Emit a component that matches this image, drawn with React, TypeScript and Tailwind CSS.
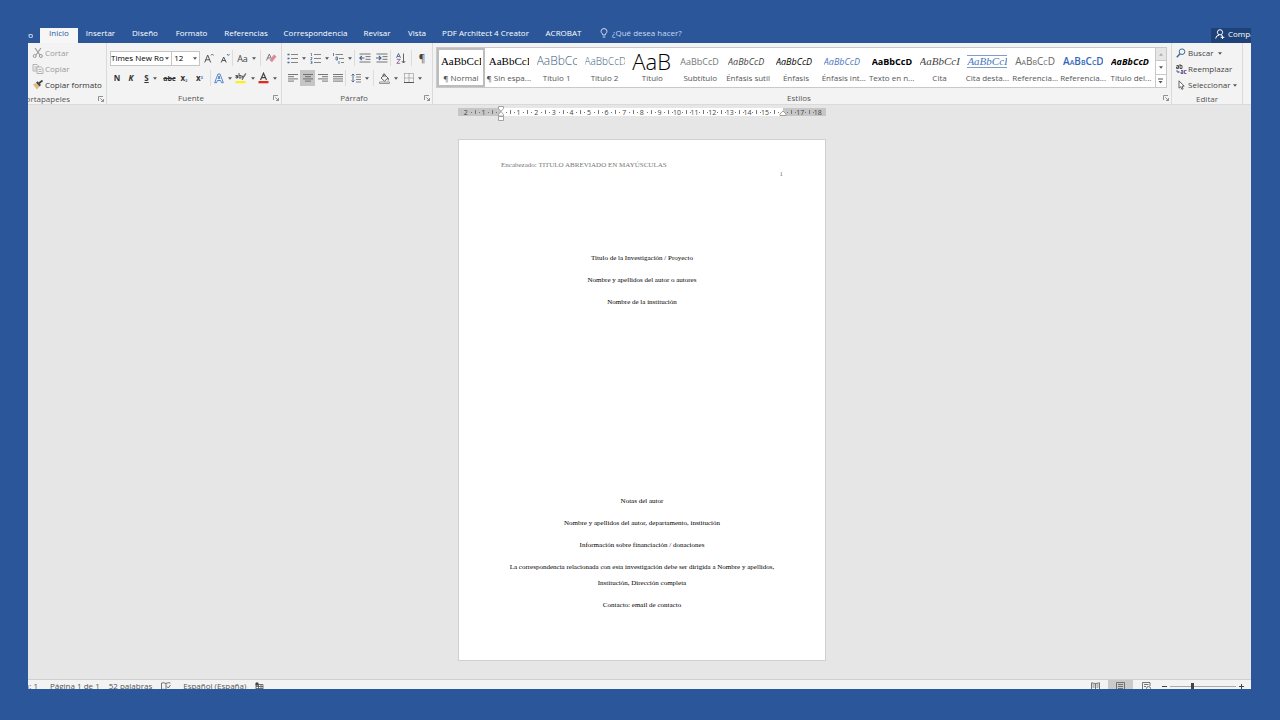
import type { ReactNode } from "react";

const tabs = [
  { label: "Insertar", width: "w-[45px]" },
  { label: "Diseño", width: "w-[44px]" },
  { label: "Formato", width: "w-[49px]" },
  { label: "Referencias", width: "w-[60px]" },
  { label: "Correspondencia", width: "w-[79px]" },
  { label: "Revisar", width: "w-[44px]" },
  { label: "Vista", width: "w-[36px]" },
  { label: "PDF Architect 4 Creator", width: "w-[101px]" },
  { label: "ACROBAT", width: "w-[55px]" },
];

const serif = "font-['Liberation_Serif',serif]";

const wordStyles = [
  { name: "¶ Normal", sample: "AaBbCcI", look: `${serif} text-[11px] text-black` },
  { name: "¶ Sin espa...", sample: "AaBbCcI", look: `${serif} text-[11px] text-black` },
  { name: "Título 1", sample: "AaBbCc", look: "text-[12px] font-light text-[#3c6080]" },
  { name: "Título 2", sample: "AaBbCcD", look: "text-[10px] font-light text-[#3c6080]" },
  { name: "Título", sample: "AaB", look: "text-[22px] font-light text-black" },
  { name: "Subtítulo", sample: "AaBbCcD", look: "text-[9px] text-[#777]" },
  { name: "Énfasis sutil", sample: "AaBbCcD", look: "text-[9px] italic text-[#444]" },
  { name: "Énfasis", sample: "AaBbCcD", look: "text-[9px] italic text-black" },
  { name: "Énfasis int...", sample: "AaBbCcD", look: "text-[9px] italic text-[#4a78bd]" },
  { name: "Texto en n...", sample: "AaBbCcD", look: "text-[9px] font-bold text-black" },
  { name: "Cita", sample: "AaBbCcI", look: `${serif} text-[11px] italic text-[#444]` },
  { name: "Cita desta...", sample: "AaBbCcI", look: `${serif} text-[11px] italic text-[#4a78bd] border-y border-[#7f9dcc]` },
  { name: "Referencia...", sample: "AaBbCcD", look: "text-[10px] [font-variant-caps:small-caps] text-[#666]" },
  { name: "Referencia...", sample: "AaBbCcD", look: "text-[10px] font-semibold [font-variant-caps:small-caps] text-[#2f66bb]" },
  { name: "Título del...", sample: "AaBbCcD", look: "text-[9px] font-bold italic text-black" },
];

function Caret() {
  return (
    <svg width="4" height="3" viewBox="0 0 4 3" className="flex-none">
      <path d="M0 .3h4L2 2.7z" fill="#555" />
    </svg>
  );
}

function Tool({ label, width, active, children }: { label: string; width: string; active?: boolean; children: ReactNode }) {
  return (
    <button
      aria-label={label}
      className={`flex h-4 flex-none items-center justify-center gap-1 leading-none ${width} ${active ? "bg-[#c5c5c5]" : ""}`}
    >
      {children}
    </button>
  );
}

function Divider() {
  return <span className="h-4 w-px flex-none bg-[#dcdcdc]" />;
}

function Launcher({ label }: { label: string }) {
  return (
    <button aria-label={label} className="flex-none">
      <svg width="6" height="6" viewBox="0 0 6 6" fill="none" stroke="#777" strokeWidth=".8">
        <path d="M.5 5V.5H5M2.3 2.3l3 3M5.5 3v2.5H3" />
      </svg>
    </button>
  );
}

function GroupFooter({ label, launcher }: { label: string; launcher?: boolean }) {
  return (
    <div className="flex h-3 items-center px-[2px] text-[#555]">
      <span className="flex-1 text-center">{label}</span>
      {launcher && <Launcher label={`Opciones de ${label}`} />}
    </div>
  );
}

function Lines({ rows }: { rows: number[][] }) {
  return (
    <svg width="10" height="10" viewBox="0 0 10 10" stroke="#666" strokeWidth=".9">
      {rows.map(([from, to], i) => (
        <path key={i} d={`M${from} ${1.5 + i * 2.2}H${to}`} />
      ))}
    </svg>
  );
}

function ListIcon({ kind }: { kind: "bullets" | "numbers" | "levels" }) {
  return (
    <svg width="11" height="11" viewBox="0 0 11 11" fill="none">
      {kind === "bullets" && <path d="M.5 1.5h2M.5 5.5h2M.5 9.5h2" stroke="#44658f" strokeWidth="1.6" />}
      {kind === "numbers" && <path d="M.5.5h1v2.5M.5 4.5h1.5v1l-1.5 1h1.5M.5 8.3H2v2.4H.5M1 9.5h1" stroke="#44658f" strokeWidth=".7" />}
      {kind === "levels" && <path d="M.5 0v3M3 4h1.5v3H3zM6 8v3" stroke="#44658f" strokeWidth=".8" />}
      {kind === "levels" ? (
        <path d="M2.5 1.5H10M6 5.5h5M8 9.5h3" stroke="#777" strokeWidth=".9" />
      ) : (
        <path d="M4 1.5h7M4 5.5h7M4 9.5h7" stroke="#777" strokeWidth=".9" />
      )}
    </svg>
  );
}

function IndentIcon({ right }: { right?: boolean }) {
  return (
    <svg width="12" height="10" viewBox="0 0 12 10" fill="none">
      <path d="M.5 1h11M6.5 3.6h5M6.5 6.3h5M.5 9h11" stroke="#666" strokeWidth=".9" />
      <path d={right ? "M0 5h4.5M3 3l2 2-2 2" : "M1 5h4.5M2.8 3l-2 2 2 2"} stroke="#44658f" strokeWidth="1.1" />
    </svg>
  );
}

function Clipboard() {
  return (
    <section className="flex w-[79px] flex-none flex-col border-r border-[#dadada]">
      <div className="flex h-[50px] flex-col pt-[2px] pl-1">
        <button className="flex h-4 items-center gap-px text-[#999]">
          <svg width="12" height="10" viewBox="0 0 12 10" fill="none" stroke="#999">
            <path d="M3 0l5 7M9 0L4 7" strokeWidth="1.1" />
            <circle cx="2.7" cy="8" r="1.5" />
            <circle cx="8.9" cy="8" r="1.5" />
          </svg>
          Cortar
        </button>
        <button className="flex h-4 items-center gap-px text-[#999]">
          <svg width="12" height="10" viewBox="0 0 12 10" fill="#f4f4f4" stroke="#aaa" strokeWidth=".9">
            <path d="M1 .5h4l1.5 1.5V7H1zM2.3 3h3M2.3 5h3" />
            <path d="M5 3h4.2L11 4.7V9.5H5zM6.5 5.5h3M6.5 7.5h3" />
          </svg>
          Copiar
        </button>
        <button className="flex h-4 items-center gap-px whitespace-nowrap text-[#333]">
          <svg width="12" height="10" viewBox="0 0 12 10">
            <path d="M1 4.5l3-1.5 3.5 3.5-2.5 3z" fill="#dfbd78" />
            <path d="M4 2.5l1.500-1.300L9 5 7.500 6.500z" fill="#444" />
            <path d="M7 3.2L10.5.5" stroke="#444" strokeWidth="1.8" />
          </svg>
          Copiar formato
        </button>
      </div>
      <div className="flex h-3 items-center justify-between pr-[2px] text-[#555]">
        <span className="flex w-[42px] justify-end overflow-hidden">Portapapeles</span>
        <Launcher label="Opciones de Portapapeles" />
      </div>
    </section>
  );
}

function FontGroup() {
  return (
    <section className="flex w-[175px] flex-none flex-col border-r border-[#dadada]">
      <div className="flex h-[50px] flex-col gap-1 pt-[7px] pl-[3px]">
        <div className="flex h-4 items-center">
          <div className="flex h-[15px] w-[63px] items-center border border-[#c6c6c6] bg-white pr-[2px]">
            <select aria-label="Fuente" className="h-3 min-w-0 flex-1 appearance-none overflow-hidden [text-overflow:clip]">
              <option>Times New Ro</option>
            </select>
            <Caret />
          </div>
          <div className="flex h-[15px] w-7 items-center border border-l-0 border-[#c6c6c6] bg-white pr-[2px]">
            <select aria-label="Tamaño de fuente" className="h-3 min-w-0 flex-1 appearance-none pl-[2px]">
              <option>12</option>
            </select>
            <Caret />
          </div>
          <Tool label="Aumentar tamaño" width="w-[18px]">
            <svg width="10" height="10" viewBox="0 0 10 10" fill="none" stroke="#555">
              <path d="M.7 9.5L3.700 2l3 7.500M1.700 6.800h4" />
              <path d="M7 2.500L8.300 1l1.300 1.500" stroke="#44658f" strokeWidth=".9" />
            </svg>
          </Tool>
          <Tool label="Reducir tamaño" width="w-[14px]">
            <svg width="10" height="10" viewBox="0 0 10 10" fill="none" stroke="#555">
              <path d="M1.2 9.5L3.700 4l2.500 5.500M2 7.500h3.500" />
              <path d="M7 1l1.300 1.500L9.600 1" stroke="#44658f" strokeWidth=".9" />
            </svg>
          </Tool>
          <Divider />
          <Tool label="Cambiar mayúsculas" width="w-[27px]">
            <span className="text-[9px] text-[#444]">Aa</span>
            <Caret />
          </Tool>
          <Divider />
          <Tool label="Borrar formato" width="w-5">
            <svg width="11" height="10" viewBox="0 0 11 10" fill="none">
              <path d="M.5 7.500L3.300 1l2 4.500M1.500 5h3" stroke="#777" />
              <path d="M3.500 7L8 1.500l2.500 2L6 9.200z" fill="#df8a9a" />
            </svg>
          </Tool>
        </div>
        <div className="flex h-4 items-center text-[#333]">
          <Tool label="Negrita" width="w-[14px]"><b>N</b></Tool>
          <Tool label="Cursiva" width="w-[14px]"><b className="italic">K</b></Tool>
          <Tool label="Subrayado" width="w-[25px]">
            <b className="underline">S</b>
            <Caret />
          </Tool>
          <Tool label="Tachado" width="w-[13px]"><b className="text-[7px] line-through">abc</b></Tool>
          <Tool label="Subíndice" width="w-4"><b>x<span className="text-[6px] text-[#44658f]">₂</span></b></Tool>
          <Tool label="Superíndice" width="w-[15px]"><b>x<span className="text-[6px] text-[#44658f]">²</span></b></Tool>
          <span className="w-[3px]" />
          <Divider />
          <Tool label="Efectos de texto" width="w-[23px]">
            <svg width="10" height="11" viewBox="0 0 10 11" fill="#fff" stroke="#3f78c3" strokeWidth=".9">
              <path d="M.7 9.700L4 1h2l3.300 8.700H7.400L6.700 7.500H3.300L2.600 9.700zM4 5.700h2L5 2.800z" />
            </svg>
            <Caret />
          </Tool>
          <Tool label="Color de resaltado" width="w-[22px]">
            <svg width="12" height="12" viewBox="0 0 12 12" fill="none">
              <path d="M.5 3.500h2V6H1V4.700h1.500M4 1v5h2V3.500H4M7 3.500L8.200 6M10 3L7 8" stroke="#444" strokeWidth=".9" />
              <path d="M6.500 6l4-5 1 1-4 5z" fill="#777" />
              <path d="M.5 9h10v2.300H.5z" fill="#f7f31a" />
            </svg>
            <Caret />
          </Tool>
          <Tool label="Color de fuente" width="w-[22px]">
            <svg width="11" height="12" viewBox="0 0 11 12" fill="none">
              <path d="M2.500 8L5.500 1.200 8.500 8M3.500 5.700h4" stroke="#444" strokeWidth="1.200" />
              <path d="M.5 9h10v2.300H.5z" fill="#e02b20" />
            </svg>
            <Caret />
          </Tool>
        </div>
      </div>
      <GroupFooter label="Fuente" launcher />
    </section>
  );
}

function ParagraphGroup() {
  return (
    <section className="flex w-[151px] flex-none flex-col border-r border-[#dadada]">
      <div className="flex h-[50px] flex-col gap-1 pt-[7px] pl-[3px]">
        <div className="flex h-4 items-center">
          <Tool label="Viñetas" width="w-[23px]"><ListIcon kind="bullets" /><Caret /></Tool>
          <Tool label="Numeración" width="w-[23px]"><ListIcon kind="numbers" /><Caret /></Tool>
          <Tool label="Lista multinivel" width="w-[23px]"><ListIcon kind="levels" /><Caret /></Tool>
          <Divider />
          <Tool label="Disminuir sangría" width="w-[19px]"><IndentIcon /></Tool>
          <Tool label="Aumentar sangría" width="w-4"><IndentIcon right /></Tool>
          <Divider />
          <Tool label="Ordenar" width="w-5">
            <svg width="10" height="11" viewBox="0 0 10 11" fill="none">
              <path d="M.5 4.800L2.500.5l2 4.300M1.200 3.500h2.500" stroke="#44658f" strokeWidth=".9" />
              <path d="M.8 6.300h3.400L.8 10.300h3.400" stroke="#8a5a92" strokeWidth=".9" />
              <path d="M7.500.5v9.500M5.700 8l1.800 2 1.800-2" stroke="#555" strokeWidth=".9" />
            </svg>
          </Tool>
          <Divider />
          <Tool label="Mostrar todo" width="w-5"><span className="text-[10px] text-[#444]">¶</span></Tool>
        </div>
        <div className="flex h-4 items-center">
          <Tool label="Alinear a la izquierda" width="w-[15px]"><Lines rows={[[0, 10], [0, 6], [0, 10], [0, 6]]} /></Tool>
          <Tool label="Centrar" width="w-[15px]" active><Lines rows={[[0, 10], [2, 8], [0, 10], [2, 8]]} /></Tool>
          <Tool label="Alinear a la derecha" width="w-[15px]"><Lines rows={[[0, 10], [4, 10], [0, 10], [4, 10]]} /></Tool>
          <Tool label="Justificar" width="w-[15px]"><Lines rows={[[0, 10], [0, 10], [0, 10], [0, 10]]} /></Tool>
          <Divider />
          <Tool label="Interlineado" width="w-[27px]">
            <svg width="10" height="10" viewBox="0 0 10 10" fill="none">
              <path d="M2 1v8M.5 2.500L2 1l1.500 1.500M.5 7.500L2 9l1.500-1.500" stroke="#44658f" strokeWidth=".9" />
              <path d="M5 1.500h5M5 4h5M5 6.500h5M5 9h5" stroke="#777" strokeWidth=".9" />
            </svg>
            <Caret />
          </Tool>
          <Divider />
          <Tool label="Sombreado" width="w-[29px]">
            <svg width="11" height="11" viewBox="0 0 11 11" fill="none" stroke="#555" strokeWidth=".9">
              <path d="M2 5l3.500-3.500L9 5 5.500 8.200zM4 4V1.500q1-1.500 2 0V4M9.300 5v2.500" />
              <path d="M.5 9h10v1.500H.5z" fill="#fff" stroke="#888" />
            </svg>
            <Caret />
          </Tool>
          <Tool label="Bordes" width="w-[20px]">
            <svg width="10" height="10" viewBox="0 0 10 10" fill="none" stroke="#777" strokeWidth=".9">
              <path d="M.5.5h9v9M.5.5v9M5 .5v9M.5 5h9" strokeDasharray="1 1" />
              <path d="M0 9.500h10" stroke="#444" />
            </svg>
            <Caret />
          </Tool>
        </div>
      </div>
      <GroupFooter label="Párrafo" launcher />
    </section>
  );
}

function StylesGroup() {
  return (
    <section className="flex min-w-0 flex-1 flex-col border-r border-[#dadada]">
      <div className="h-[50px] pt-1 pr-1 pl-[3px]">
        <div className="flex h-[41px] border border-[#c9c9c9] bg-white">
          {wordStyles.map((style, i) => (
            <button
              key={i}
              className={`flex min-w-0 flex-1 flex-col items-center overflow-hidden ${i === 0 ? "outline-2 -outline-offset-2 outline-[#bdbdbd]" : ""}`}
            >
              <span className="flex h-6 w-10 items-center overflow-hidden pt-[2px]">
                <span className={`leading-none whitespace-nowrap ${style.look}`}>{style.sample}</span>
              </span>
              <span className="h-3 leading-3 whitespace-nowrap text-[#555]">{style.name}</span>
            </button>
          ))}
          <div className="flex w-[11px] flex-none flex-col divide-y divide-[#c9c9c9] border-l border-[#c9c9c9]">
            <button aria-label="Fila anterior" className="flex flex-1 items-center justify-center bg-[#e6e6e6]">
              <svg width="4" height="3" viewBox="0 0 4 3"><path d="M0 2.700h4L2 .3z" fill="#aaa" /></svg>
            </button>
            <button aria-label="Fila siguiente" className="flex flex-1 items-center justify-center"><Caret /></button>
            <button aria-label="Más estilos" className="flex flex-1 items-center justify-center">
              <svg width="5" height="6" viewBox="0 0 5 6"><path d="M0 .5h5v1H0zM.5 3h4l-2 2.500z" fill="#555" /></svg>
            </button>
          </div>
        </div>
      </div>
      <GroupFooter label="Estilos" launcher />
    </section>
  );
}

function EditGroup() {
  return (
    <section className="mr-2 flex w-[71px] flex-none flex-col border-r border-[#dadada]">
      <div className="flex h-[50px] flex-col pt-[2px] pl-1 text-[#444]">
        <button className="flex h-4 items-center gap-[2px]">
          <svg width="10" height="10" viewBox="0 0 10 10" fill="none">
            <circle cx="6" cy="3.700" r="2.800" stroke="#3d6d94" />
            <path d="M4 5.800L.8 9.200" stroke="#3d6d94" strokeWidth="1.500" />
          </svg>
          <span className="mr-[3px]">Buscar</span>
          <Caret />
        </button>
        <button className="flex h-4 items-center gap-px">
          <svg width="11" height="10" viewBox="0 0 11 10" fill="none" strokeWidth=".9">
            <path d="M.5 1.500h2v3h-2V3h2M4 0v4.500h2v-3H4" stroke="#444" />
            <path d="M5 6.500h2v3H5V8h2M10.500 6.500h-2v3h2" stroke="#6b4a84" />
            <path d="M1 6v2h2M2.300 7L3.300 8l-1 1" stroke="#44658f" />
          </svg>
          Reemplazar
        </button>
        <button className="flex h-4 items-center gap-[2px]">
          <svg width="10" height="10" viewBox="0 0 10 10" fill="#fff" stroke="#555" strokeWidth=".9">
            <path d="M3 .8v7.400l1.700-1.500 1.200 2.700 1.200-.6L6 6.200h2.200z" />
          </svg>
          Seleccionar
          <Caret />
        </button>
      </div>
      <GroupFooter label="Editar" />
    </section>
  );
}

// One centimetre on the ruler, in drawing units
const CM = 17.6;

function Ruler() {
  const origin = 43;
  const numbers = [-2, -1, 1, 2, 3, 4, 5, 6, 7, 8, 9, 10, 11, 12, 13, 14, 15, 17, 18];
  const halves = Array.from({ length: 20 }, (_, i) => i - 1.5);
  return (
    <svg width="368" height="16" viewBox="0 0 368 16" className="flex-none font-['Open_Sans',sans-serif]">
      <path d="M0 2h368v8H0z" fill="#c6c6c6" />
      <path d="M43 2h282v8H43z" fill="#fff" />
      {halves.map((n) => (
        <g key={n} fill="#777">
          <rect x={Math.round(origin + n * CM)} y="4" width="1" height="4" />
          <rect x={Math.round(origin + n * CM) - 4} y="6" width="1" height="1" />
          <rect x={Math.round(origin + n * CM) + 4} y="6" width="1" height="1" />
        </g>
      ))}
      {numbers.map((n) => (
        <text key={n} x={origin + n * CM} y="9" fontSize="7" fill="#444" textAnchor="middle">
          {Math.abs(n)}
        </text>
      ))}
      <path d="M40.500.5h5v2L43 5.500l-2.500-3zM43 5.500l2.500 3v1.500h-5V8.500zM40.500 10.500h5v4h-5z" fill="#fff" stroke="#999" strokeWidth=".9" />
      <path d="M325 5l3 3v1.500h-6V8z" fill="#fff" stroke="#999" strokeWidth=".9" />
    </svg>
  );
}

function Page() {
  return (
    <article className={`mt-[17px] flex h-[522px] w-[368px] flex-none flex-col border border-[#cfcfcf] bg-white px-[42px] text-center text-[7px] leading-4 text-black ${serif}`}>
      <header className="flex h-[110px] flex-col pt-[21px] leading-[9px] text-[#777]">
        <p className="text-left">Encabezado: TITULO ABREVIADO EN MAYÚSCULAS</p>
        <p className="text-right">1</p>
      </header>
      <div className="flex h-[243px] flex-col gap-[6px]">
        <p>Titulo de la Investigación / Proyecto</p>
        <p>Nombre y apellidos del autor o autores</p>
        <p>Nombre de la institución</p>
      </div>
      <div className="flex flex-col gap-[6px]">
        <p>Notas del autor</p>
        <p>Nombre y apellidos del autor, departamento, institución</p>
        <p>Información sobre financiación / donaciones</p>
        <p className="whitespace-nowrap">
          La correspondencia relacionada con esta investigación debe ser dirigida a Nombre y apellidos,
          <br />
          Institución, Dirección completa
        </p>
        <p>Contacto: email de contacto</p>
      </div>
    </article>
  );
}

function StatusBar() {
  return (
    <footer className="flex h-[10px] flex-none items-start overflow-hidden border-t border-[#cfcfcf] bg-[#f3f3f3] leading-3 whitespace-nowrap text-[#555]">
      <span className="flex w-[10px] justify-end overflow-hidden">Sección: 1</span>
      <span className="ml-3">Página 1 de 1</span>
      <span className="ml-[9px]">52 palabras</span>
      <button aria-label="Revisión" className="ml-[9px] pt-[2px]">
        <svg width="10" height="9" viewBox="0 0 10 9" fill="none" stroke="#666" strokeWidth=".9">
          <path d="M5 1.500Q3 .2.500 1v6.500q2.500-.8 4.500.5zM5 1.500Q7 .2 9.500 1M6 4.500l1.300 1.500L9.500 3" />
        </svg>
      </button>
      <span className="ml-3">Español (España)</span>
      <button aria-label="Grabar macro" className="ml-[9px] pt-[2px]">
        <svg width="9" height="9" viewBox="0 0 9 9" fill="none" stroke="#555">
          <path d="M1 2.500h7v6H1zM1 4.500h7M1 6.500h7M3.500 2.500v6M6 2.500v6" strokeWidth=".8" />
          <circle cx="2" cy="2" r="1.700" fill="#444" stroke="none" />
        </svg>
      </button>
      <div className="ml-auto flex items-start">
        <button aria-label="Modo de lectura" className="flex h-3 w-[25px] justify-center pt-[2px]">
          <svg width="9" height="9" viewBox="0 0 9 9" fill="none" stroke="#666" strokeWidth=".9">
            <path d="M.5.8l4 .8 4-.8v7h-8zM4.500 1.500V8M1.500 3h2M1.500 5h2M5.500 3h2M5.500 5h2" />
          </svg>
        </button>
        <button aria-label="Diseño de impresión" className="flex h-3 w-[25px] justify-center bg-[#cacaca] pt-[2px]">
          <svg width="9" height="9" viewBox="0 0 9 9" fill="none" stroke="#666" strokeWidth=".9">
            <path d="M.5.5h8v8h-8zM2 2.500h5M2 4.500h5M2 6.500h5" />
          </svg>
        </button>
        <button aria-label="Diseño web" className="flex h-3 w-[26px] justify-center pt-[2px]">
          <svg width="9" height="9" viewBox="0 0 9 9" fill="none" stroke="#666" strokeWidth=".9">
            <path d="M8 4V.5H.5v7H4M2 2.500h4.500M2 4.500h2" />
            <circle cx="6.500" cy="6.500" r="2" />
          </svg>
        </button>
        <button aria-label="Alejar" className="flex h-3 w-[11px] items-center justify-center">
          <svg width="5" height="5" viewBox="0 0 5 5"><path d="M0 2.500h5" stroke="#444" /></svg>
        </button>
        <input
          type="range"
          aria-label="Zoom"
          defaultValue={34}
          className="mt-[2px] h-[9px] w-[66px] appearance-none bg-[linear-gradient(#aaa,#aaa)] bg-[length:100%_1px] bg-center bg-no-repeat [&::-webkit-slider-thumb]:h-[7px] [&::-webkit-slider-thumb]:w-[3px] [&::-webkit-slider-thumb]:appearance-none [&::-webkit-slider-thumb]:bg-[#444]"
        />
        <button aria-label="Acercar" className="mr-[5px] flex h-3 w-[10px] items-center justify-center">
          <svg width="5" height="5" viewBox="0 0 5 5"><path d="M0 2.500h5M2.500 0v5" stroke="#444" /></svg>
        </button>
      </div>
    </footer>
  );
}

export default function App() {
  return (
    <div className="h-screen bg-[#2b579a] pt-7 pr-[29px] pb-[31px] pl-7 font-['Open_Sans','Noto_Sans',sans-serif] text-[8px] leading-3">
      <div className="flex h-full flex-col overflow-hidden">
        <nav className="flex h-[15px] flex-none items-center whitespace-nowrap text-white">
          <button className="flex w-[5px] justify-end overflow-hidden pb-[2px]">Archivo</button>
          <button className="ml-[7px] flex h-full w-[38px] items-center justify-center bg-[#f6f6f6] pb-[6px] text-[#2b579a]">
            Inicio
          </button>
          {tabs.map((tab) => (
            <button key={tab.label} className={`flex h-full flex-none items-center justify-center pb-[6px] ${tab.width}`}>
              {tab.label}
            </button>
          ))}
          <button className="ml-[9px] flex h-full items-center gap-1 pb-[6px] text-[#c9d8ef]">
            <svg width="8" height="10" viewBox="0 0 8 10" fill="none" stroke="#dce6f5" strokeWidth=".9">
              <path d="M2.700 7V6Q1 4.800 1 3.300 1.200.6 4 .5 6.800.6 7 3.300 7 4.800 5.300 6v1zM2.700 9h2.600" />
            </svg>
            ¿Qué desea hacer?
          </button>
          <button className="ml-auto flex h-full w-10 items-center gap-[3px] overflow-hidden bg-[#1e4278] pb-[4px] pl-1">
            <svg width="10" height="10" viewBox="0 0 10 10" fill="none" stroke="#fff" className="flex-none">
              <circle cx="5" cy="3.300" r="2.600" />
              <path d="M.7 9.500Q1 6.300 4 6.200M6 6.500q1 .3 1.500 1M7.500 6.500v3.500M5.700 8.300h3.600" />
            </svg>
            Compartir
          </button>
        </nav>
        <div className="flex h-[62px] flex-none border-b border-[#dadada] bg-[#f3f3f3]">
          <Clipboard />
          <FontGroup />
          <ParagraphGroup />
          <StylesGroup />
          <EditGroup />
        </div>
        <main className="flex min-h-0 flex-1 flex-col items-center overflow-hidden bg-[#e6e6e6] pt-px pl-[5px]">
          <Ruler />
          <Page />
        </main>
        <StatusBar />
      </div>
    </div>
  );
}
